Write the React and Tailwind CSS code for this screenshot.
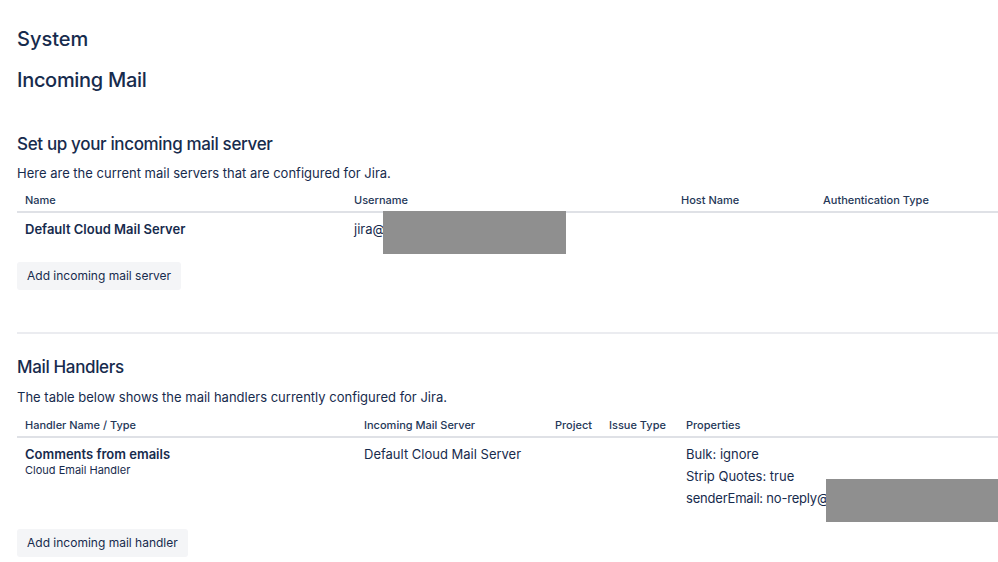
import React from "react";

const servers = [{ name: "Default Cloud Mail Server", user: "jira@" }];

function Redacted({ className }) {
  // grey block laid over hidden values
  return <div className={"absolute bg-[#8f8f8f] " + className} />;
}

export default function App() {
  return (
    <div
      className="min-h-screen w-[998px] overflow-hidden bg-white text-[#172b4d] pl-[17px]"
      style={{ fontFamily: "Inter, 'Noto Sans', sans-serif" }}
    >
      <h1 className="pt-[27px] text-[20px] leading-[24px] font-medium">System</h1>
      <h2 className="mt-[17px] text-[20px] leading-[24px] font-medium tracking-[-0.3px]">Incoming Mail</h2>

      {/* mail servers */}
      <h3 className="mt-[42px] text-[17px] leading-[20px] font-medium tracking-[-0.35px]">
        Set up your incoming mail server
      </h3>
      <p className="mt-[10px] text-[13px] leading-[18px]">
        Here are the current mail servers that are configured for Jira.
      </p>
      <table className="mt-[10px] w-[1000px] table-fixed border-collapse text-left">
        <thead>
          <tr className="border-b-2 border-[#dfe1e6] text-[11px] text-[#253858]">
            <th className="w-[329px] px-2 pb-[2px] font-medium">Name</th>
            <th className="w-[327px] px-2 pb-[2px] font-medium">Username</th>
            <th className="w-[142px] px-2 pb-[2px] font-medium">Host Name</th>
            <th className="px-2 pb-[2px] font-medium">Authentication Type</th>
          </tr>
        </thead>
        <tbody>
          {servers.map((s) => (
            <tr key={s.name} className="text-[13px] align-top">
              <td className="px-2 pt-[7px] pb-[14px] font-semibold">{s.name}</td>
              <td className="relative px-2 pt-[7px] pb-[14px]">
                {s.user}
                <Redacted className="left-[37px] top-[-2px] w-[183px] h-[43px]" />
              </td>
              <td className="px-2" />
              <td className="px-2" />
            </tr>
          ))}
        </tbody>
      </table>
      <button className="mt-[9px] h-[28px] rounded-[3px] bg-[#f4f5f7] px-[10px] text-[12px] text-[#172b4d]">
        Add incoming mail server
      </button>

      <div className="mt-[42px] h-[2px] bg-[#ebecf0]" />

      {/* mail handlers */}
      <h3 className="mt-[23px] text-[17px] leading-[20px] font-medium tracking-[-0.35px]">Mail Handlers</h3>
      <p className="mt-[11px] text-[13px] leading-[18px]">
        The table below shows the mail handlers currently configured for Jira.
      </p>
      <table className="mt-[11px] w-[1000px] table-fixed border-collapse text-left">
        <thead>
          <tr className="border-b-2 border-[#dfe1e6] text-[11px] text-[#253858]">
            <th className="w-[339px] px-2 pb-[2px] font-medium">Handler Name / Type</th>
            <th className="w-[191px] px-2 pb-[2px] font-medium">Incoming Mail Server</th>
            <th className="w-[54px] px-2 pb-[2px] font-medium">Project</th>
            <th className="w-[77px] px-2 pb-[2px] font-medium">Issue Type</th>
            <th className="px-2 pb-[2px] font-medium">Properties</th>
          </tr>
        </thead>
        <tbody>
          <tr className="text-[13px] align-top">
            <td className="px-2 pt-[8px]">
              <div className="font-semibold leading-[16px]">Comments from emails</div>
              <div className="text-[11px] leading-[16px]">Cloud Email Handler</div>
            </td>
            <td className="px-2 pt-[8px] leading-[16px]">Default Cloud Mail Server</td>
            <td className="px-2" />
            <td className="px-2" />
            <td className="relative px-2 pt-[8px] pb-[14px]">
              <ul className="flex flex-col gap-[6px] leading-[16px]">
                <li>Bulk: ignore</li>
                <li>Strip Quotes: true</li>
                <li className="tracking-[-0.2px]">senderEmail: no-reply@t</li>
              </ul>
              <Redacted className="left-[148px] top-[41px] w-[200px] h-[43px]" />
            </td>
          </tr>
        </tbody>
      </table>
      <button className="mt-[9px] h-[28px] rounded-[3px] bg-[#f4f5f7] px-[10px] text-[12px] text-[#172b4d]">
        Add incoming mail handler
      </button>
    </div>
  );
}
